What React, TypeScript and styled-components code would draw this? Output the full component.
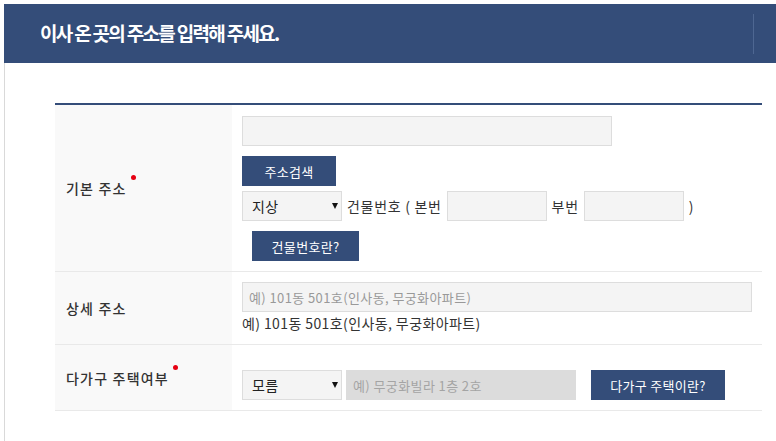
import React from "react";
import styled, { createGlobalStyle } from "styled-components";

const GlobalStyle = createGlobalStyle`
  html, body {
    margin: 0;
    padding: 0;
    background: #ffffff;
  }
  body {
    font-family: "Noto Sans CJK KR", "Noto Sans", sans-serif;
    color: #333333;
    letter-spacing: 0.4px;
  }
  * {
    box-sizing: border-box;
  }
`;

const navy = "#344d79";

const Wrapper = styled.div`
  margin: 4px 0 0 4px;
`;

const Header = styled.header`
  height: 59px;
  background: ${navy};
  display: flex;
  align-items: center;
  justify-content: space-between;
  padding-left: 36px;
  padding-right: 22px;
`;

const Title = styled.h1`
  margin: 0;
  color: #ffffff;
  font-size: 19px;
  font-weight: 700;
  letter-spacing: -1.7px;
  line-height: 1;
  padding-bottom: 2px;
`;

const HeaderDivider = styled.span`
  width: 1px;
  height: 40px;
  background: #4e6792;
`;

const Content = styled.section`
  border-left: 1px solid #d9d9d9;
  padding: 40px 14px 40px 50px;
`;

const Table = styled.div`
  border-top: 2px solid ${navy};
`;

const Row = styled.div`
  display: flex;
  border-bottom: 1px solid #e9e9e9;
`;

const Label = styled.div`
  width: 177px;
  flex-shrink: 0;
  background: #f9f9f9;
  display: flex;
  align-items: center;
  padding-left: 11px;
  font-size: 14px;
  font-weight: 500;
  letter-spacing: 1.2px;
  color: #333;
`;

const LabelText = styled.span<{ $required?: boolean }>`
  position: relative;
  &::after {
    content: "";
    display: ${(p) => (p.$required ? "block" : "none")};
    position: absolute;
    right: -9px;
    top: -3px;
    width: 5px;
    height: 5px;
    border-radius: 50%;
    background: #e60012;
  }
`;

const Cell = styled.div<{ $pt?: number }>`
  flex: 1;
  padding: ${(p) => p.$pt ?? 10}px 10px 10px 10px;
  display: flex;
  flex-direction: column;
  align-items: flex-start;
`;

const TextInput = styled.input<{ $w?: number; $disabled?: boolean }>`
  width: ${(p) => (p.$w ? `${p.$w}px` : "100%")};
  height: 30px;
  border: 1px solid ${(p) => (p.$disabled ? "#dcdcdc" : "#dddddd")};
  background: ${(p) => (p.$disabled ? "#dcdcdc" : "#f4f4f4")};
  padding: 0 6px;
  font-family: inherit;
  font-size: 13px;
  letter-spacing: 0.4px;
  color: #333;
  outline: none;
  &::placeholder {
    color: ${(p) => (p.$disabled ? "#a4a4a4" : "#999999")};
  }
`;

const Button = styled.button<{ $w: number; $ml?: number; $mt?: number }>`
  width: ${(p) => p.$w}px;
  height: 30px;
  margin-left: ${(p) => p.$ml ?? 0}px;
  margin-top: ${(p) => p.$mt ?? 0}px;
  background: ${navy};
  border: none;
  color: #ffffff;
  font-family: inherit;
  font-size: 13px;
  letter-spacing: 0.3px;
  padding: 0;
  cursor: pointer;
`;

const Line = styled.div<{ $mt?: number; $gap?: number }>`
  display: flex;
  align-items: center;
  gap: ${(p) => p.$gap ?? 5}px;
  margin-top: ${(p) => p.$mt ?? 0}px;
  font-size: 14px;
  letter-spacing: 0.7px;
  color: #333;
  white-space: nowrap;
`;

const SelectBox = styled.div`
  position: relative;
  width: 100px;
  height: 30px;
  &::after {
    content: "";
    position: absolute;
    right: 4px;
    top: 12px;
    border-left: 3px solid transparent;
    border-right: 3px solid transparent;
    border-top: 6px solid #111;
    pointer-events: none;
  }
`;

const Select = styled.select`
  appearance: none;
  width: 100%;
  height: 100%;
  border: 1px solid #dddddd;
  background: #f4f4f4;
  padding: 0 9px;
  font-family: inherit;
  font-size: 14px;
  letter-spacing: 0.4px;
  color: #222;
  outline: none;
`;

const Hint = styled.p`
  margin: 0;
  font-size: 14px;
  line-height: 22px;
  color: #333;
`;

export default function App() {
  return (
    <>
      <GlobalStyle />
      <Wrapper>
        <Header>
          <Title>이사 온 곳의 주소를 입력해 주세요.</Title>
          <HeaderDivider />
        </Header>
        <Content>
          <Table>
            <Row>
              <Label>
                <LabelText $required>기본 주소</LabelText>
              </Label>
              <Cell $pt={11}>
                <TextInput $w={370} readOnly />
                <Button $w={94} $mt={10}>주소검색</Button>
                <Line $mt={5}>
                  <SelectBox>
                    <Select defaultValue="지상">
                      <option>지상</option>
                      <option>지하</option>
                    </Select>
                  </SelectBox>
                  <span>건물번호 ( 본번</span>
                  <TextInput $w={100} />
                  <span>부번</span>
                  <TextInput $w={100} />
                  <span>)</span>
                </Line>
                <Button $w={107} $ml={10} $mt={10}>건물번호란?</Button>
              </Cell>
            </Row>
            <Row>
              <Label>
                <LabelText>상세 주소</LabelText>
              </Label>
              <Cell>
                <TextInput placeholder="예) 101동 501호(인사동, 무궁화아파트)" />
                <Hint>예) 101동 501호(인사동, 무궁화아파트)</Hint>
              </Cell>
            </Row>
            <Row>
              <Label>
                <LabelText $required>다가구 주택여부</LabelText>
              </Label>
              <Cell $pt={25}>
                <Line $gap={4}>
                  <SelectBox>
                    <Select defaultValue="모름">
                      <option>모름</option>
                      <option>예</option>
                      <option>아니오</option>
                    </Select>
                  </SelectBox>
                  <TextInput $w={230} $disabled disabled placeholder="예) 무궁화빌라 1층 2호" />
                  <Button $w={134} $ml={11}>다가구 주택이란?</Button>
                </Line>
              </Cell>
            </Row>
          </Table>
        </Content>
      </Wrapper>
    </>
  );
}
